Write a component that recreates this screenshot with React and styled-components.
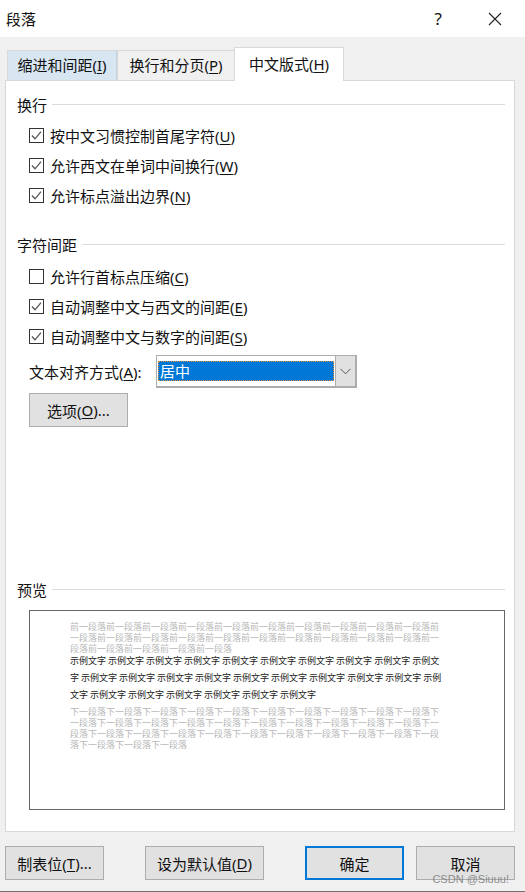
import styled, { createGlobalStyle } from "styled-components";

const GlobalStyle = createGlobalStyle`
  html, body {
    margin: 0;
    padding: 0;
    background: #f0f0f0;
  }
  * {
    box-sizing: border-box;
  }
`;

const spacingRows = [
  { label: "按中文习惯控制首尾字符", key: "U", checked: true },
  { label: "允许西文在单词中间换行", key: "W", checked: true },
  { label: "允许标点溢出边界", key: "N", checked: true },
];

const charRows = [
  { label: "允许行首标点压缩", key: "C", checked: false },
  { label: "自动调整中文与西文的间距", key: "E", checked: true },
  { label: "自动调整中文与数字的间距", key: "S", checked: true },
];

function CheckRow({ label, hotkey, checked }) {
  return (
    <Row>
      <Box>
        {checked && (
          <svg width="13" height="13" viewBox="0 0 13 13">
            <path d="M2 6.5 L5 9.8 L11 2.6" fill="none" stroke="#555" strokeWidth="1.3" />
          </svg>
        )}
      </Box>
      <span>
        {label}(<u>{hotkey}</u>)
      </span>
    </Row>
  );
}

export default function App() {
  return (
    <Dialog>
      <GlobalStyle />
      <TitleBar>
        <WindowTitle>段落</WindowTitle>
        <TitleActions>
          <Help>?</Help>
          <svg width="14" height="14" viewBox="0 0 14 14">
            <path d="M1 1 L13 13 M13 1 L1 13" stroke="#222" strokeWidth="1.1" />
          </svg>
        </TitleActions>
      </TitleBar>

      <Tabs>
        <Tab $hover>
          缩进和间距(<u>I</u>)
        </Tab>
        <Tab>
          换行和分页(<u>P</u>)
        </Tab>
        <ActiveTab>
          中文版式(<u>H</u>)
        </ActiveTab>
      </Tabs>

      <Panel>
        <Group>
          <GroupTitle>换行</GroupTitle>
          <Rows $top={3}>
            {spacingRows.map((r) => (
              <CheckRow key={r.key} label={r.label} hotkey={r.key} checked={r.checked} />
            ))}
          </Rows>
        </Group>

        <Group $top={23}>
          <GroupTitle>字符间距</GroupTitle>
          <Rows $top={4}>
            {charRows.map((r) => (
              <CheckRow key={r.key} label={r.label} hotkey={r.key} checked={r.checked} />
            ))}
          </Rows>
          <SelectRow>
            <SelectLabel>
              文本对齐方式(<u>A</u>):
            </SelectLabel>
            <Select>
              <SelectValue>居中</SelectValue>
              <SelectArrow>
                <svg width="11" height="7" viewBox="0 0 11 7">
                  <path d="M0.5 0.8 L5.5 5.8 L10.5 0.8" fill="none" stroke="#555" strokeWidth="1" />
                </svg>
              </SelectArrow>
            </Select>
          </SelectRow>
          <OptionsButton>
            选项(<u>O</u>)...
          </OptionsButton>
        </Group>

        <Group $top={151}>
          <GroupTitle>预览</GroupTitle>
          <Preview>
            <PreviewText $muted>
              前一段落前一段落前一段落前一段落前一段落前一段落前一段落前一段落前一段落前一段落前
              <br />
              一段落前一段落前一段落前一段落前一段落前一段落前一段落前一段落前一段落前一段落前一
              <br />
              段落前一段落前一段落前一段落前一段落
            </PreviewText>
            <PreviewText>
              示例文字 示例文字 示例文字 示例文字 示例文字 示例文字 示例文字 示例文字 示例文字 示例文
              <br />
              字 示例文字 示例文字 示例文字 示例文字 示例文字 示例文字 示例文字 示例文字 示例文字 示例
              <br />
              文字 示例文字 示例文字 示例文字 示例文字 示例文字 示例文字
            </PreviewText>
            <PreviewText $muted>
              下一段落下一段落下一段落下一段落下一段落下一段落下一段落下一段落下一段落下一段落下
              <br />
              一段落下一段落下一段落下一段落下一段落下一段落下一段落下一段落下一段落下一段落下一
              <br />
              段落下一段落下一段落下一段落下一段落下一段落下一段落下一段落下一段落下一段落下一段
              <br />
              落下一段落下一段落下一段落
            </PreviewText>
          </Preview>
        </Group>
      </Panel>

      <Footer>
        <FooterGroup>
          <FooterButton $width={99}>
            制表位(<u>T</u>)...
          </FooterButton>
          <FooterButton $width={119}>
            设为默认值(<u>D</u>)
          </FooterButton>
        </FooterGroup>
        <FooterGroup>
          <FooterButton $width={99} $primary>
            确定
          </FooterButton>
          <FooterButton $width={99}>取消</FooterButton>
        </FooterGroup>
      </Footer>
      <Watermark>CSDN @Siuuu!</Watermark>
    </Dialog>
  );
}

const Dialog = styled.div`
  position: relative;
  width: 525px;
  height: 892px;
  overflow: hidden;
  background: #f0f0f0;
  border-bottom: 1px solid #707070;
  font-family: "Noto Sans", "Noto Sans CJK SC", sans-serif;
  font-size: 15px;
  color: #111;

  u {
    text-underline-offset: 2px;
    text-decoration-thickness: 1px;
  }
`;

const TitleBar = styled.div`
  height: 37px;
  background: #fff;
  display: flex;
  align-items: center;
  justify-content: space-between;
  padding: 0 23px 0 6px;
`;

const WindowTitle = styled.div`
  font-size: 15px;
`;

const TitleActions = styled.div`
  display: flex;
  align-items: center;
  gap: 46px;
`;

const Help = styled.div`
  font-size: 17px;
  line-height: 20px;
`;

const Tabs = styled.div`
  display: flex;
  align-items: flex-end;
  height: 43px;
  padding-left: 7px;
`;

const Tab = styled.div`
  width: ${(props) => (props.$hover ? "110px" : "117px")};
  height: 30px;
  padding-bottom: 2px;
  display: flex;
  align-items: center;
  justify-content: center;
  white-space: pre;
  background: ${(props) => (props.$hover ? "#d8e6f2" : "#f0f0f0")};
  border: 1px solid #d9d9d9;
  border-bottom: none;
  border-right: ${(props) => (props.$hover ? "1px solid #c5d3de" : "none")};
`;

const ActiveTab = styled.div`
  position: relative;
  z-index: 1;
  width: 110px;
  height: 34px;
  margin-bottom: -1px;
  padding-bottom: 2px;
  display: flex;
  align-items: center;
  justify-content: center;
  white-space: pre;
  background: #fff;
  border: 1px solid #d9d9d9;
  border-bottom: none;
`;

const Panel = styled.div`
  width: 510px;
  height: 752px;
  margin-left: 5px;
  padding: 12px 9px 0 11px;
  background: #fff;
  border: 1px solid #d9d9d9;
`;

const Group = styled.div`
  margin-top: ${(props) => props.$top || 0}px;
`;

const GroupTitle = styled.div`
  display: flex;
  align-items: center;
  gap: 5px;
  height: 24px;
  line-height: 24px;

  &::after {
    content: "";
    flex: 1;
    height: 1px;
    background: #dcdcdc;
    margin-top: -1px;
  }
`;

const Rows = styled.div`
  display: flex;
  flex-direction: column;
  margin-top: ${(props) => props.$top}px;
  padding-left: 12px;
`;

const Row = styled.div`
  height: 30px;
  display: flex;
  align-items: center;
  gap: 6px;
  white-space: pre;
`;

const Box = styled.div`
  width: 15px;
  height: 15px;
  flex: none;
  display: flex;
  align-items: center;
  justify-content: center;
  background: #fff;
  border: 1px solid #333;
`;

const SelectRow = styled.div`
  display: flex;
  align-items: center;
  height: 33px;
  margin-top: 4px;
  padding-left: 12px;
`;

const SelectLabel = styled.div`
  width: 127px;
  white-space: pre;
`;

const Select = styled.div`
  width: 201px;
  height: 33px;
  display: flex;
  background: #fff;
  border: 1px solid #adadad;
  border-right-width: 2px;
  border-bottom-width: 2px;
`;

const SelectValue = styled.div`
  flex: 1;
  margin: 5px 1px;
  padding-left: 2px;
  background: #0078d7;
  color: #fff;
  outline: 1px dotted #e08a3c;
  outline-offset: -1px;
  line-height: 20px;
`;

const SelectArrow = styled.div`
  width: 20px;
  display: flex;
  align-items: center;
  justify-content: center;
  background: #e1e1e1;
  border-left: 1px solid #adadad;
`;

const OptionsButton = styled.div`
  width: 99px;
  height: 34px;
  margin: 5px 0 0 12px;
  display: flex;
  align-items: center;
  justify-content: center;
  white-space: pre;
  background: #e1e1e1;
  border: 1px solid #adadad;
`;

const Preview = styled.div`
  height: 200px;
  margin: 8px 0 0 12px;
  padding: 10px 0 0 40px;
  border: 1px solid #666;
  background: #fff;
`;

const PreviewText = styled.div`
  white-space: pre;
  font-size: 9px;
  font-family: "Noto Sans CJK SC", sans-serif;
  line-height: ${(props) => (props.$muted ? "11px" : "17px")};
  color: ${(props) => (props.$muted ? "#b8b8b8" : "#1a1a1a")};
  margin: ${(props) => (props.$muted ? "0" : "-2px 0 3px")};
`;

const Footer = styled.div`
  display: flex;
  justify-content: space-between;
  align-items: center;
  padding: 14px 10px 0 5px;
`;

const FooterGroup = styled.div`
  display: flex;
  gap: 41px;

  &:last-child {
    gap: 12px;
  }
`;

const FooterButton = styled.div`
  width: ${(props) => props.$width}px;
  height: 34px;
  display: flex;
  align-items: center;
  justify-content: center;
  white-space: pre;
  background: #e1e1e1;
  border: ${(props) => (props.$primary ? "2px solid #0078d7" : "1px solid #adadad")};
`;

const Watermark = styled.div`
  position: absolute;
  right: 16px;
  bottom: 6px;
  font-family: "Liberation Sans", sans-serif;
  font-size: 11px;
  color: rgba(120, 120, 120, 0.85);
`;
